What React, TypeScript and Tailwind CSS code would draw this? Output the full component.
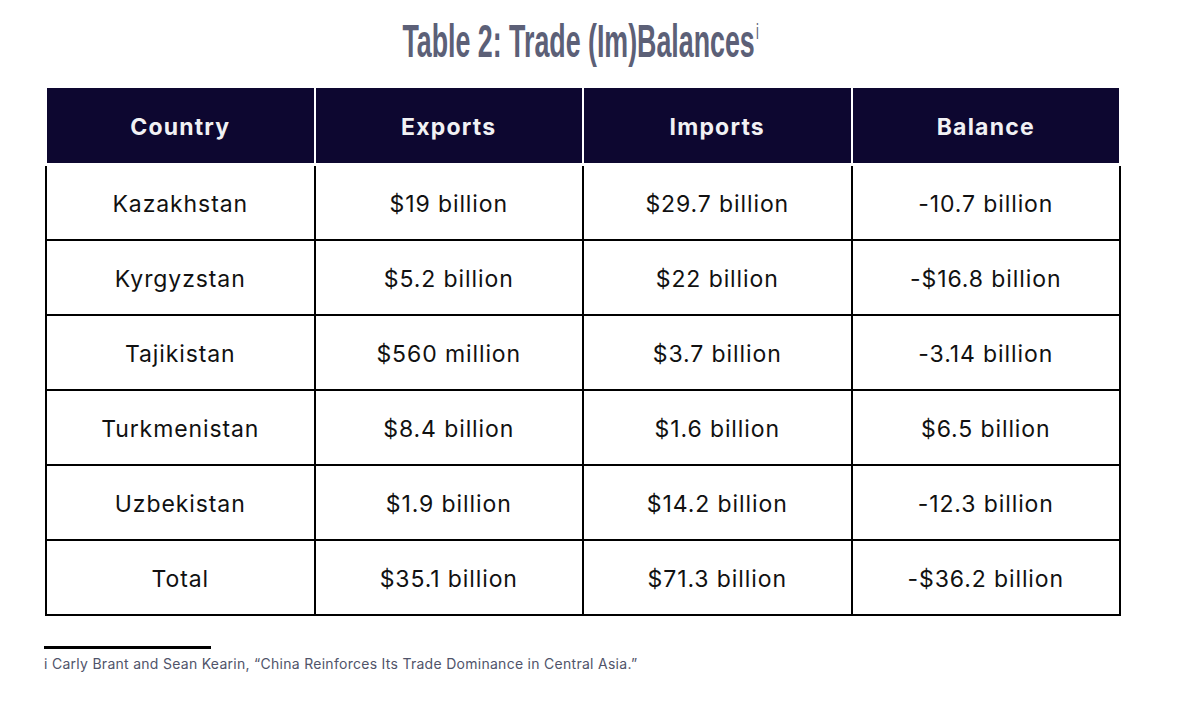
const rows = [
  ['Kazakhstan', '$19 billion', '$29.7 billion', '-10.7 billion'],
  ['Kyrgyzstan', '$5.2 billion', '$22 billion', '-$16.8 billion'],
  ['Tajikistan', '$560 million', '$3.7 billion', '-3.14 billion'],
  ['Turkmenistan', '$8.4 billion', '$1.6 billion', '$6.5 billion'],
  ['Uzbekistan', '$1.9 billion', '$14.2 billion', '-12.3 billion'],
  ['Total', '$35.1 billion', '$71.3 billion', '-$36.2 billion'],
]

const headers = ['Country', 'Exports', 'Imports', 'Balance']

export default function App() {
  return (
    <div className="w-[1180px] h-[708px] bg-white font-['Inter',sans-serif] text-black">
      <div className="flex justify-center pt-[15px] h-[88px]">
        <h1 className="origin-top mr-[18px] scale-x-[0.57] font-['Liberation_Sans',sans-serif] font-bold text-[47px] leading-[52px] text-[#5c6077] whitespace-nowrap">
          Table 2: Trade (Im)Balances
          <span className="inline-block align-top text-[22px] leading-none font-normal ml-[2px] mt-[6px]">i</span>
        </h1>
      </div>

      <div className="ml-[45px] w-[1076px]">
        <div className="ml-[2px] w-[1072px] grid grid-cols-4 gap-x-[2px]">
          {headers.map((h) => (
            <div
              key={h}
              className="h-[75px] pt-[4px] bg-[#0d0730] flex items-center justify-center text-[#f1f1f4] font-bold text-[23px] tracking-[1.2px]"
            >
              {h}
            </div>
          ))}
        </div>

        <div className="mt-[3px] bg-black px-[2px] pb-[2px] grid grid-cols-4 gap-[2px]">
          {rows.map((r) =>
            r.map((c, i) => (
              <div
                key={r[0] + i}
                className="h-[73px] pt-[4px] bg-white flex items-center justify-center text-[23px] tracking-[0.9px] text-[#111]"
              >
                {c}
              </div>
            ))
          )}
        </div>
      </div>

      <div className="ml-[44px] mt-[30px] w-[167px] h-[3px] bg-black" />
      <p className="ml-[44px] mt-[4px] text-[14px] tracking-[0.28px] text-[#50546a]">
        i Carly Brant and Sean Kearin, “China Reinforces Its Trade Dominance in Central Asia.”
      </p>
    </div>
  )
}
